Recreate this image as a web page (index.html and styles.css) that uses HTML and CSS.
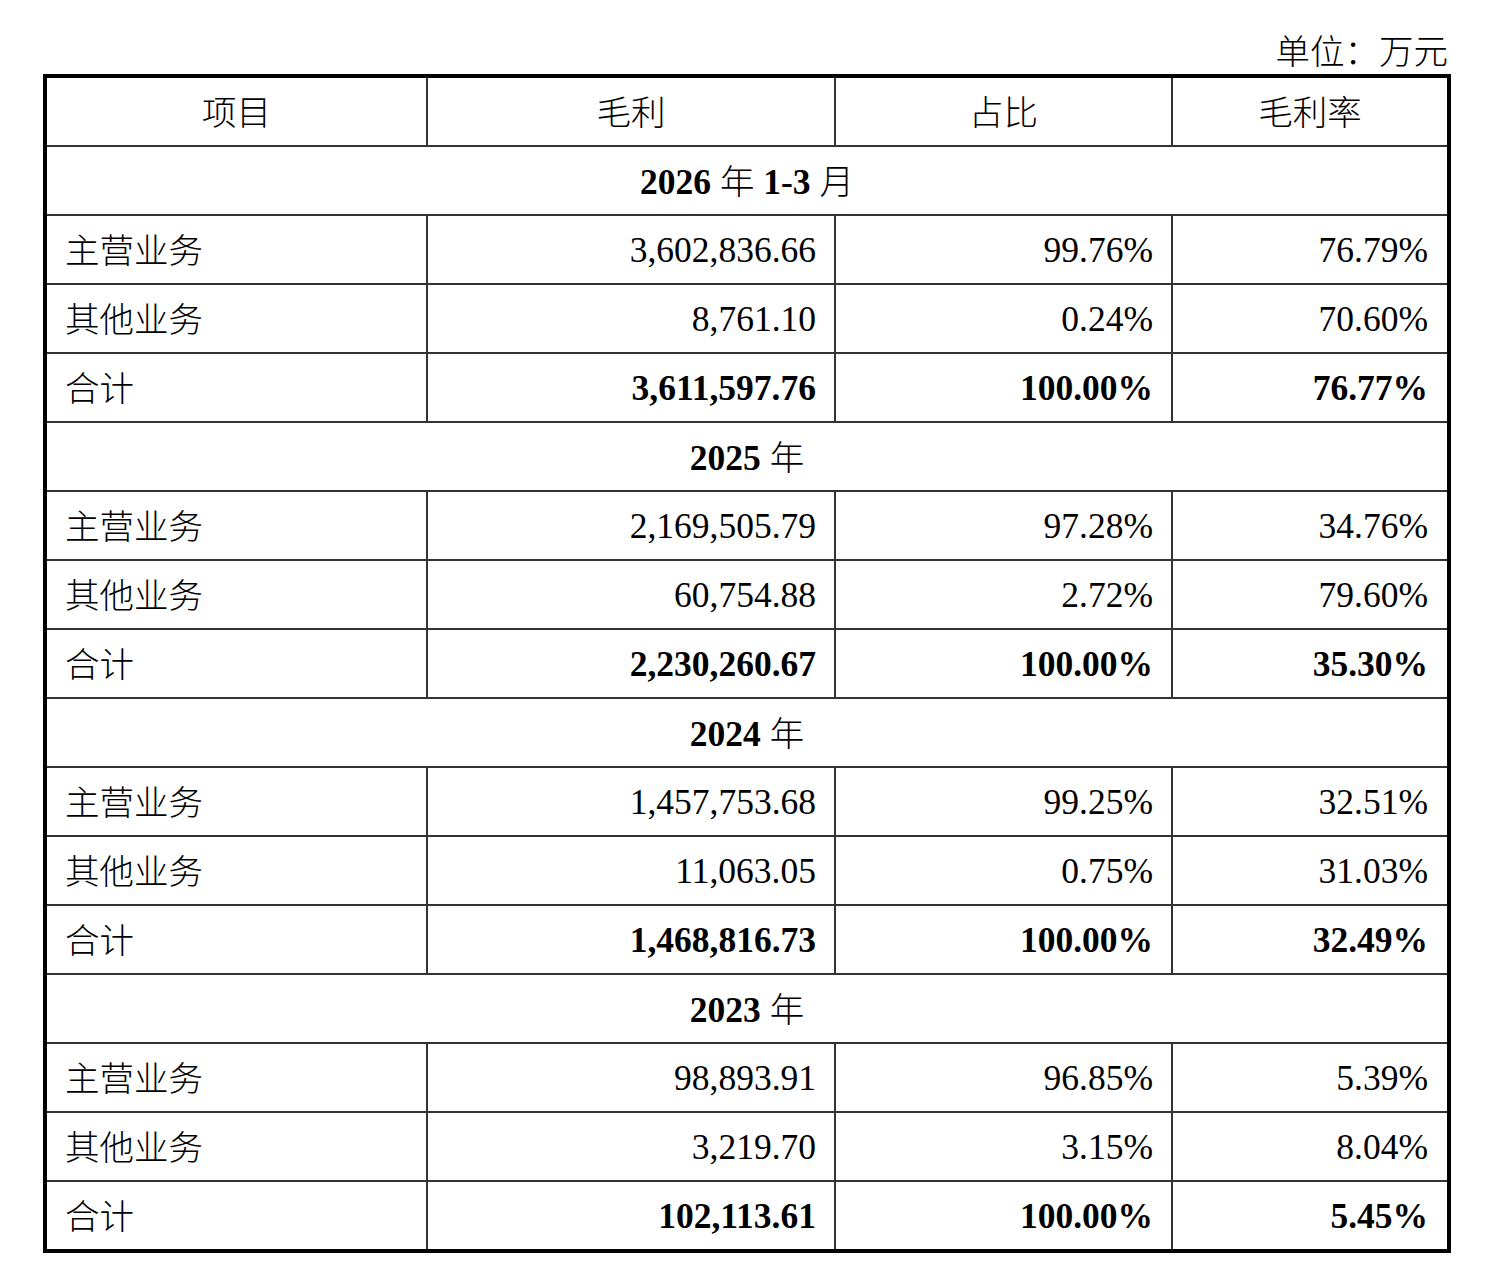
FILE: index.html
```html
<!DOCTYPE html>
<html lang="zh-CN">
<head>
<meta charset="utf-8">
<title>毛利构成</title>
<link rel="stylesheet" href="styles.css">
</head>
<body>
<div class="page">
  <div class="unit"><span class="zh">单位：万元</span></div>
  <table class="tbl">
    <colgroup>
      <col class="c1"><col class="c2"><col class="c3"><col class="c4">
    </colgroup>
    <tr class="head">
      <td class="center"><span class="zh">项目</span></td>
      <td class="center"><span class="zh">毛利</span></td>
      <td class="center"><span class="zh">占比</span></td>
      <td class="center last"><span class="zh">毛利率</span></td>
    </tr>
    <tr class="sec"><td colspan="4" class="center last"><b>2026</b> <span class="zh">年</span> <b>1-3</b> <span class="zh">月</span></td></tr>
    <tr><td><span class="zh">主营业务</span></td><td class="num">3,602,836.66</td><td class="num">99.76%</td><td class="num last">76.79%</td></tr>
    <tr><td><span class="zh">其他业务</span></td><td class="num">8,761.10</td><td class="num">0.24%</td><td class="num last">70.60%</td></tr>
    <tr class="total"><td><span class="zh">合计</span></td><td class="num">3,611,597.76</td><td class="num">100.00%</td><td class="num last">76.77%</td></tr>
    <tr class="sec"><td colspan="4" class="center last"><b>2025</b> <span class="zh">年</span></td></tr>
    <tr><td><span class="zh">主营业务</span></td><td class="num">2,169,505.79</td><td class="num">97.28%</td><td class="num last">34.76%</td></tr>
    <tr><td><span class="zh">其他业务</span></td><td class="num">60,754.88</td><td class="num">2.72%</td><td class="num last">79.60%</td></tr>
    <tr class="total"><td><span class="zh">合计</span></td><td class="num">2,230,260.67</td><td class="num">100.00%</td><td class="num last">35.30%</td></tr>
    <tr class="sec"><td colspan="4" class="center last"><b>2024</b> <span class="zh">年</span></td></tr>
    <tr><td><span class="zh">主营业务</span></td><td class="num">1,457,753.68</td><td class="num">99.25%</td><td class="num last">32.51%</td></tr>
    <tr><td><span class="zh">其他业务</span></td><td class="num">11,063.05</td><td class="num">0.75%</td><td class="num last">31.03%</td></tr>
    <tr class="total"><td><span class="zh">合计</span></td><td class="num">1,468,816.73</td><td class="num">100.00%</td><td class="num last">32.49%</td></tr>
    <tr class="sec"><td colspan="4" class="center last"><b>2023</b> <span class="zh">年</span></td></tr>
    <tr><td><span class="zh">主营业务</span></td><td class="num">98,893.91</td><td class="num">96.85%</td><td class="num last">5.39%</td></tr>
    <tr><td><span class="zh">其他业务</span></td><td class="num">3,219.70</td><td class="num">3.15%</td><td class="num last">8.04%</td></tr>
    <tr class="total lastrow"><td><span class="zh">合计</span></td><td class="num">102,113.61</td><td class="num">100.00%</td><td class="num last">5.45%</td></tr>
  </table>
</div>
</body>
</html>
```

FILE: styles.css
```css
html, body {
  margin: 0;
  padding: 0;
  background: #ffffff;
}

body {
  font-family: "Liberation Serif", "Noto Sans CJK SC", serif;
  color: #000000;
}

.page {
  padding-left: 43px;
  width: 1408px;
}

.zh {
  font-family: "Noto Sans CJK SC", sans-serif;
  font-weight: 300;
  font-size: 34.5px;
}

.unit {
  height: 74px;
  display: flex;
  justify-content: flex-end;
  align-items: flex-end;
  padding-right: 3px;
  box-sizing: border-box;
  padding-bottom: 3px;
  line-height: 44px;
}

.tbl {
  width: 1408px;
  border: 4px solid #000000;
  border-collapse: separate;
  border-spacing: 0;
  table-layout: fixed;
}

.c1 { width: 381px; }
.c2 { width: 408px; }
.c3 { width: 337px; }
.c4 { width: 274px; }

.tbl td {
  box-sizing: border-box;
  padding: 0 18px;
  font-size: 35.5px;
  line-height: 42px;
  vertical-align: middle;
  border-right: 2px solid #333333;
  border-bottom: 2px solid #333333;
  white-space: nowrap;
}

.tbl td.last {
  border-right: none;
}

.tbl tr td {
  height: 69px;
}

.tbl tr.lastrow td {
  border-bottom: none;
  height: 67px;
}

.center {
  text-align: center;
}

.num {
  text-align: right;
}

.tbl td.num.last {
  padding-right: 19px;
}

.total .num {
  font-weight: 700;
}

.sec b {
  font-weight: 700;
}
```
